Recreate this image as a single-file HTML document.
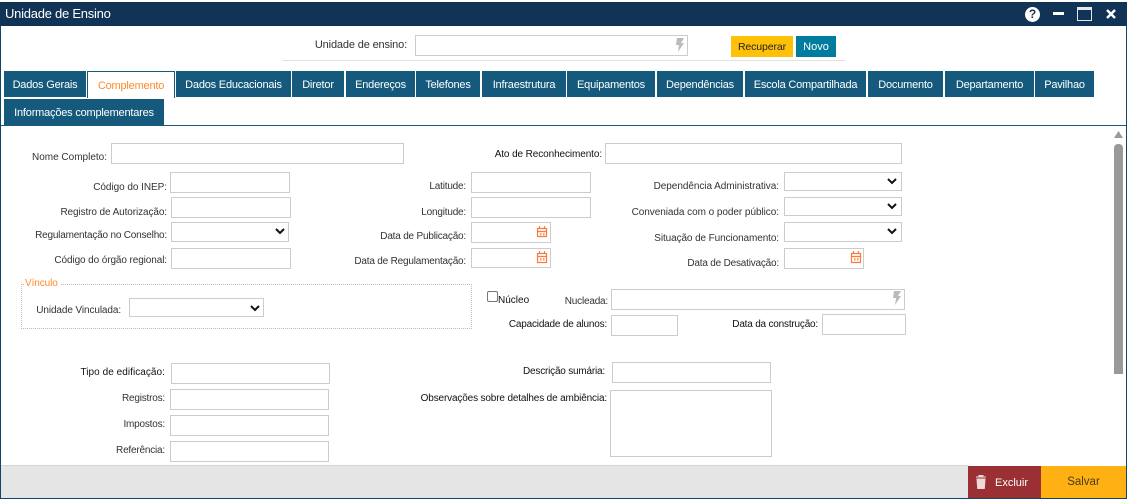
<!DOCTYPE html>
<html><head><meta charset="utf-8">
<style>
html,body{margin:0;padding:0;background:#fff;width:1131px;height:499px;overflow:hidden;font-family:"Liberation Sans",sans-serif;font-size:11px;color:#333}
div,span{position:absolute;box-sizing:border-box}
.tab{background:#155a7c;color:#fff;height:26px;top:71px;line-height:29px;text-align:center;font-size:11px;letter-spacing:-.2px;white-space:nowrap}
.in{border:1px solid #ccc;background:#fff}
.l{text-align:right;white-space:nowrap;height:14px;line-height:14px;font-size:10px;letter-spacing:-.2px;color:#333;margin-top:1px}
.d{color:#111}
svg{position:absolute;overflow:visible}
</style></head><body>
<div style="left:0;top:2px;width:1127px;height:497px;border:1px solid #11466b;border-width:0 1px 1px 1px"></div>
<div style="left:0;top:2px;width:1127px;height:24px;background:#103356"></div>
<span style="left:5px;top:6px;color:#fff;font-size:13px;letter-spacing:-.25px;line-height:16px;white-space:nowrap">Unidade de Ensino</span>
<div style="left:1025px;top:7px;width:15px;height:15px;border-radius:50%;background:#fff;color:#103356;font-weight:bold;font-size:12px;line-height:15px;text-align:center">?</div>
<div style="left:1053px;top:12px;width:11px;height:3px;background:#fff"></div>
<div style="left:1077px;top:7px;width:15px;height:14px;border:1px solid #e4e8ec;border-top-width:3px"></div>
<svg style="left:1106px;top:9px" width="10" height="10"><path d="M1 1L9 9M9 1L1 9" stroke="#fff" stroke-width="2.4"/></svg>

<span class="l" style="left:290px;width:117px;top:37px;font-size:11px;letter-spacing:-.15px">Unidade de ensino:</span>
<div class="in" style="left:415px;top:35px;width:273px;height:21px"></div>
<svg style="left:674px;top:38px" width="11" height="15"><path d="M3 0H10L7 5H10L4 14L5 7H2Z" fill="#bbb"/></svg>
<div style="left:282px;top:60px;width:563px;height:1px;background:#e2e2e2"></div>
<div style="left:731px;top:36px;width:62px;height:21px;background:#ffc107;color:#222;text-align:center;line-height:22px;font-size:10.500px;letter-spacing:-.1px">Recuperar</div>
<div style="left:796px;top:36px;width:40px;height:21px;background:#007c9e;color:#fff;text-align:center;line-height:22px;font-size:11px">Novo</div>

<div class="tab" style="left:4px;width:82px">Dados Gerais</div>
<div class="tab" style="left:87px;width:88px;height:27px;background:#fff;color:#ff8a2a;border:1px solid #155a7c;border-bottom:0;line-height:28px">Complemento</div>
<div class="tab" style="left:176px;width:115px">Dados Educacionais</div>
<div class="tab" style="left:292px;width:52px">Diretor</div>
<div class="tab" style="left:346px;width:69px">Endereços</div>
<div class="tab" style="left:416px;width:64px">Telefones</div>
<div class="tab" style="left:482px;width:84px">Infraestrutura</div>
<div class="tab" style="left:567px;width:88px">Equipamentos</div>
<div class="tab" style="left:657px;width:86px">Dependências</div>
<div class="tab" style="left:745px;width:121px">Escola Compartilhada</div>
<div class="tab" style="left:868px;width:75px">Documento</div>
<div class="tab" style="left:945px;width:89px">Departamento</div>
<div class="tab" style="left:1035px;width:59px">Pavilhao</div>
<div class="tab" style="left:4px;top:99px;width:160px">Informações complementares</div>
<div style="left:1px;top:125px;width:1125px;height:1px;background:#155a7c"></div>

<span class="l" style="left:0;width:107px;top:150px;letter-spacing:0">Nome Completo:</span>
<div class="in" style="left:111px;top:143px;width:293px;height:21px"></div>
<span class="l d" style="left:450px;width:152px;top:147px;letter-spacing:-.1px">Ato de Reconhecimento:</span>
<div class="in" style="left:605px;top:143px;width:297px;height:21px"></div>

<span class="l" style="left:0;width:167px;top:180px;letter-spacing:-.05px">Código do INEP:</span>
<div class="in" style="left:170px;top:172px;width:120px;height:21px"></div>
<span class="l" style="left:0;width:167px;top:205px;letter-spacing:-.1px">Registro de Autorização:</span>
<div class="in" style="left:171px;top:197px;width:120px;height:21px"></div>
<span class="l" style="left:0;width:167px;top:228px">Regulamentação no Conselho:</span>
<div class="in" style="left:171px;top:222px;width:118px;height:20px"></div>
<span class="l" style="left:0;width:167px;top:253px;letter-spacing:-.1px">Código do órgão regional:</span>
<div class="in" style="left:171px;top:248px;width:120px;height:21px"></div>

<span class="l" style="left:380px;width:86px;top:179px">Latitude:</span>
<div class="in" style="left:471px;top:172px;width:120px;height:21px"></div>
<span class="l" style="left:380px;width:86px;top:205px">Longitude:</span>
<div class="in" style="left:471px;top:197px;width:120px;height:21px"></div>
<span class="l" style="left:340px;width:126px;top:229px">Data de Publicação:</span>
<div class="in" style="left:471px;top:222px;width:80px;height:21px"></div>
<span class="l" style="left:320px;width:146px;top:254px">Data de Regulamentação:</span>
<div class="in" style="left:471px;top:248px;width:80px;height:20px"></div>

<span class="l" style="left:600px;width:179px;top:179px;letter-spacing:-.05px">Dependência Administrativa:</span>
<div class="in" style="left:784px;top:172px;width:118px;height:19px"></div>
<span class="l" style="left:600px;width:179px;top:205px;letter-spacing:-.05px">Conveniada com o poder público:</span>
<div class="in" style="left:784px;top:197px;width:118px;height:19px"></div>
<span class="l" style="left:600px;width:179px;top:231px;letter-spacing:-.1px">Situação de Funcionamento:</span>
<div class="in" style="left:784px;top:222px;width:118px;height:20px"></div>
<span class="l" style="left:600px;width:179px;top:256px">Data de Desativação:</span>
<div class="in" style="left:784px;top:248px;width:80px;height:21px"></div>

<div style="left:21px;top:284px;width:451px;height:45px;border:1px dotted #bbb"></div>
<span style="left:24px;top:277px;background:#fff;padding:0 3px 0 1px;color:#ff8a2a;font-size:10px;letter-spacing:-.1px;line-height:14px">Vínculo</span>
<span class="l" style="left:20px;width:101px;top:303px;letter-spacing:-.1px">Unidade Vinculada:</span>
<div class="in" style="left:129px;top:298px;width:135px;height:19px"></div>

<div style="left:487px;top:291px;width:11px;height:11px;border:1px solid #777;border-radius:2px"></div>
<span class="l d" style="left:498px;top:293px;text-align:left;letter-spacing:0">Núcleo</span>
<span class="l" style="left:540px;width:68px;top:294px">Nucleada:</span>
<div class="in" style="left:611px;top:289px;width:294px;height:21px"></div>
<svg style="left:891px;top:291px" width="11" height="15"><path d="M3 0H10L7 5H10L4 14L5 7H2Z" fill="#bbb"/></svg>
<span class="l d" style="left:480px;width:127px;top:317px">Capacidade de alunos:</span>
<div class="in" style="left:611px;top:315px;width:67px;height:21px"></div>
<span class="l d" style="left:700px;width:118px;top:317px">Data da construção:</span>
<div class="in" style="left:822px;top:314px;width:84px;height:21px"></div>

<span class="l d" style="left:50px;width:115px;top:365px;letter-spacing:.05px">Tipo de edificação:</span>
<div class="in" style="left:171px;top:363px;width:159px;height:21px"></div>
<span class="l" style="left:50px;width:115px;top:391px">Registros:</span>
<div class="in" style="left:170px;top:389px;width:159px;height:21px"></div>
<span class="l" style="left:50px;width:115px;top:417px">Impostos:</span>
<div class="in" style="left:170px;top:415px;width:159px;height:21px"></div>
<span class="l" style="left:50px;width:115px;top:443px">Referência:</span>
<div class="in" style="left:170px;top:441px;width:159px;height:21px"></div>

<span class="l d" style="left:480px;width:125px;top:364px">Descrição sumária:</span>
<div class="in" style="left:612px;top:362px;width:159px;height:21px"></div>
<span class="l d" style="left:400px;width:207px;top:391px;letter-spacing:-.15px">Observações sobre detalhes de ambiência:</span>
<div class="in" style="left:610px;top:390px;width:162px;height:67px"></div>

<svg style="left:0;top:0" width="1131" height="499">
<g fill="none" stroke="#111" stroke-width="2">
<path d="M888 179l4 4 4-4M888 204l4 4 4-4M888 229l4 4 4-4M276 229l4 4 4-4M251 306l4 4 4-4"/>
</g>
<g fill="none" stroke="#ff7a3a" stroke-width="1.200">
<path d="M537.500 228.500h9v8h-9zM537.500 231.500h9M539.500 226v3M544.500 226v3M537.500 253.500h9v9h-9zM537.500 256.500h9M539.500 251v3M544.500 251v3M851.500 253.500h9v9h-9zM851.500 256.500h9M853.500 251v3M858.500 251v3"/>
</g>
<g fill="#ff9a6a">
<path d="M540 233h1.500v2.500H540zM543 233h1.500v2.500H543zM540 258h1.500v2.500H540zM543 258h1.500v2.500H543zM854 258h1.500v2.500H854zM857 258h1.500v2.500H857z"/>
</g>
</svg>

<svg style="left:1114px;top:131px" width="9" height="7"><path d="M4.500 0L9 7H0Z" fill="#999"/></svg>
<div style="left:1114px;top:144px;width:9px;height:230px;background:#999;border-radius:4px 4px 0 0"></div>

<div style="left:1px;top:465px;width:967px;height:33px;background:#e5e5e5;border-top:1px solid #d5d5d5"></div>
<div style="left:968px;top:466px;width:73px;height:32px;background:#9a3033"></div>
<svg style="left:975px;top:475px" width="12" height="14"><path d="M1 2H11M4 2V0.500H8V2M2 4H10L9.300 13.500H2.700Z" fill="#f0d9d9" stroke="#f0d9d9" stroke-width="1"/></svg>
<span style="left:995px;top:476px;color:#fff;font-size:11px;line-height:14px">Excluir</span>
<div style="left:1041px;top:466px;width:85px;height:32px;background:#ffb114;color:#4a3d10;text-align:center;line-height:33px;font-size:11.500px">Salvar</div>
</body></html>
